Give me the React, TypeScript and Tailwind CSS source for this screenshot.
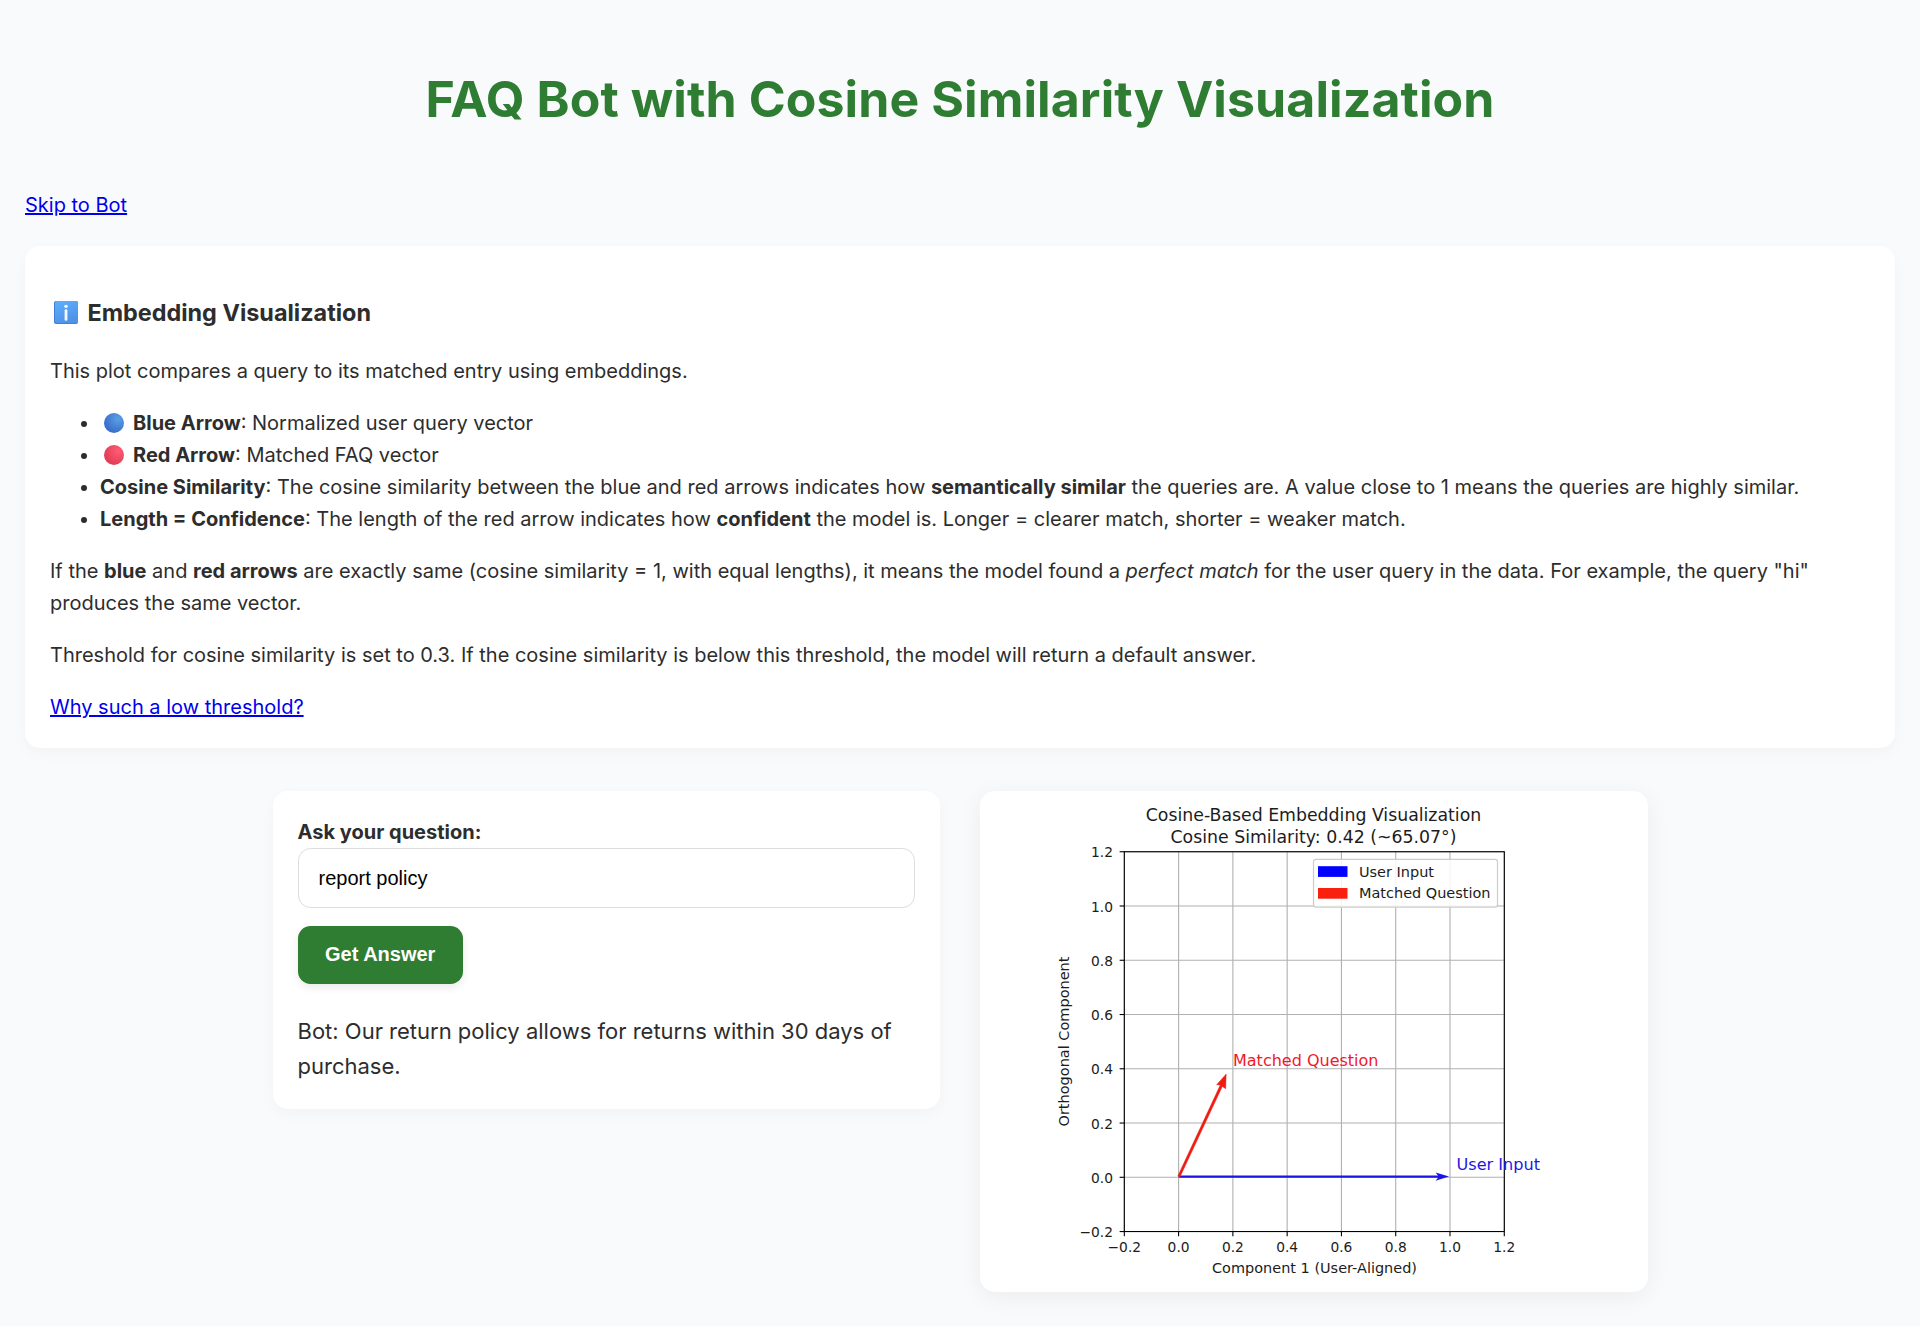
import { useState } from "react";

const sans = "font-['Inter','Liberation_Sans',sans-serif]";
const ticks = [-0.2, 0, 0.2, 0.4, 0.6, 0.8, 1.0, 1.2];
const px = (v: number) => 198.6 + v * 271.4;
const py = (v: number) => 386.3 - v * 271.3;
const label = (v: number) => (v < 0 ? "\u2212" : "") + Math.abs(v).toFixed(1);

function InfoBadge() {
  return (
    <svg viewBox="0 0 24 24" className="mr-[9.5px] ml-[4px] inline-block h-[23px] w-[24px] align-[-3px]" preserveAspectRatio="none">
      <defs>
        <linearGradient id="info" x1="0" y1="0" x2="0.4" y2="1">
          <stop offset="0" stopColor="#5eb0fb" />
          <stop offset="1" stopColor="#5092ea" />
        </linearGradient>
      </defs>
      <rect width="24" height="24" rx="2" fill="#3f7fd6" />
      <rect x="1" width="23" height="23" rx="2" fill="url(#info)" />
      <circle cx="12" cy="5.6" r="1.8" fill="#f4f8ff" />
      <rect x="10.6" y="8.6" width="2.8" height="12" rx="1.4" fill="#f4f8ff" />
    </svg>
  );
}

function Dot({ tone }: { tone: "blue" | "red" }) {
  const fill =
    tone === "blue"
      ? "bg-[radial-gradient(circle_at_70%_30%,#5aa0e4,#3f76d0_60%,#3d55bd)]"
      : "bg-[radial-gradient(circle_at_70%_30%,#ff5c76,#e8415a_60%,#c43a52)]";
  return <span className={`mr-[9px] ml-[4px] inline-block size-[20px] rounded-full align-[-3px] ${fill}`} />;
}

function Chart() {
  return (
    <svg viewBox="0 0 667.5 501" className="block h-[501px] w-[667.5px] font-['DejaVu_Sans',sans-serif]" fill="#1c1c1c">
      <g stroke="#b0b0b0" strokeWidth="1.1">
        {ticks.map((t) => (
          <g key={t}>
            <line x1={px(t)} x2={px(t)} y1={py(-0.2)} y2={py(1.2)} />
            <line x1={px(-0.2)} x2={px(1.2)} y1={py(t)} y2={py(t)} />
          </g>
        ))}
      </g>
      <polygon points="198.6,384.4 458,384.4 455.6,381.6 469,385.6 455.6,389.8 458,386.8 198.6,386.8" fill="#1c14e6" />
      <polygon points="246.2,283 245.7,297.8 242.3,295.6 200,386 197.8,385 240.2,294 236.6,293.8" fill="#ee1c12" stroke="#ee1c12" strokeWidth="0.4" />
      <g stroke="#000" strokeWidth="1.1">
        {ticks.map((t) => (
          <g key={t}>
            <line x1={px(t)} x2={px(t)} y1={py(-0.2)} y2={py(-0.2) + 4.7} />
            <line x1={px(-0.2) - 4.7} x2={px(-0.2)} y1={py(t)} y2={py(t)} />
          </g>
        ))}
        <rect x={px(-0.2)} y={py(1.2)} width="380" height="379.8" fill="none" />
      </g>
      <rect x="333.5" y="68.3" width="184" height="47.8" rx="2.5" fill="#fff" fillOpacity="0.85" stroke="#ccc" strokeWidth="1.2" />
      <rect x="338" y="75.2" width="29.5" height="10.7" fill="#0000ff" />
      <rect x="338" y="97" width="29.5" height="10.7" fill="#fa2010" />
      <g fontSize="14.2">
        <text x="379" y="85.6" textLength="75" lengthAdjust="spacingAndGlyphs">User Input</text>
        <text x="379" y="107.4" textLength="131.5" lengthAdjust="spacingAndGlyphs">Matched Question</text>
        {ticks.map((t) => (
          <g key={t}>
            <text x={px(-0.2) - 11.3} y={py(t) + 5.6} textAnchor="end" fontSize="13.8">{label(t)}</text>
            <text x={px(t)} y="461.3" textAnchor="middle" fontSize="13.8">{label(t)}</text>
          </g>
        ))}
        <text x="334.5" y="482.3" textAnchor="middle" textLength="205" lengthAdjust="spacingAndGlyphs">Component 1 (User-Aligned)</text>
        <text transform="translate(89 250.5) rotate(-90)" textAnchor="middle" textLength="170" lengthAdjust="spacingAndGlyphs">Orthogonal Component</text>
      </g>
      <g fontSize="17.5" textAnchor="middle">
        <text x="333.5" y="30.2" textLength="335.5" lengthAdjust="spacingAndGlyphs">Cosine-Based Embedding Visualization</text>
        <text x="333.5" y="52" textLength="286" lengthAdjust="spacingAndGlyphs">Cosine Similarity: 0.42 (~65.07°)</text>
      </g>
      <g fontSize="16">
        <text x="253" y="275.3" fill="#f0182a" textLength="145.5" lengthAdjust="spacingAndGlyphs">Matched Question</text>
        <text x="476.5" y="378.8" fill="#2218dc" textLength="83.5" lengthAdjust="spacingAndGlyphs">User Input</text>
      </g>
    </svg>
  );
}

export default function App() {
  const [query, setQuery] = useState("report policy");
  return (
    <div className={`h-[1326px] overflow-hidden bg-[#f9fafc] px-[25px] text-[20px] leading-[32px] text-[#2d2d2d] ${sans}`}>
      <h1 className="pt-[59px] text-center text-[50px] leading-[80px] font-bold tracking-[0.09px] text-[#2e7d32]">
        FAQ Bot with Cosine Similarity Visualization
      </h1>
      <a href="#bot" className="mt-[50px] block w-fit text-[#0000ee] underline">Skip to Bot</a>

      <section className="mt-[25px] h-[502px] rounded-[15px] bg-white px-[25px] pt-[48px] shadow-[0_5px_15px_rgba(0,0,0,0.03)]">
        <h3 className="text-[23.4px] leading-[37px] font-bold">
          <InfoBadge />Embedding Visualization
        </h3>
        <p className="mt-[24px]">This plot compares a query to its matched entry using embeddings.</p>
        <ul className="mt-[20px] list-disc pl-[50px]">
          <li><Dot tone="blue" /><b>Blue Arrow</b>: Normalized user query vector</li>
          <li><Dot tone="red" /><b>Red Arrow</b>: Matched FAQ vector</li>
          <li>
            <b>Cosine Similarity</b>: The cosine similarity between the blue and red arrows indicates how{" "}
            <b>semantically similar</b> the queries are. A value close to 1 means the queries are highly similar.
          </li>
          <li>
            <b>Length = Confidence</b>: The length of the red arrow indicates how <b>confident</b> the model is. Longer =
            clearer match, shorter = weaker match.
          </li>
        </ul>
        <p className="mt-[20px]">
          If the <b>blue</b> and <b>red arrows</b> are exactly same (cosine similarity = 1, with equal lengths), it means
          the model found a <em>perfect match</em> for the user query in the data. For example, the query "hi" produces the
          same vector.
        </p>
        <p className="mt-[20px]">
          Threshold for cosine similarity is set to 0.3. If the cosine similarity is below this threshold, the model will
          return a default answer.
        </p>
        <a href="#why" className="mt-[20px] block w-fit text-[#0000ee] underline">Why such a low threshold?</a>
      </section>

      <main id="bot" className="mx-auto mt-[43px] flex w-[1375px] items-start gap-[40px]">
        <section className="h-[318px] flex-1 rounded-[15px] bg-white px-[25px] pt-[25px] shadow-[0_5px_15px_rgba(0,0,0,0.03)]">
          <label htmlFor="q" className="block font-bold">Ask your question:</label>
          <input
            id="q"
            value={query}
            onChange={(e) => setQuery(e.target.value)}
            className="block h-[60px] w-full rounded-[12.5px] border border-[#dddddd] bg-white px-[20px] font-['Liberation_Sans',sans-serif] text-[20px] text-black outline-none"
          />
          <button className="mt-[18px] block h-[58px] rounded-[12.5px] bg-[#2e7d32] px-[27.5px] pb-[2px] font-['Liberation_Sans',sans-serif] text-[20px] font-bold text-white shadow-[0_4px_8px_rgba(0,0,0,0.08)]">
            Get Answer
          </button>
          <p className="mt-[30px] text-[22px] leading-[35.2px]">
            Bot: Our return policy allows for returns within 30 days of purchase.
          </p>
        </section>
        <section className="flex-1 rounded-[15px] bg-white shadow-[0_5px_25px_rgba(0,0,0,0.06)]">
          <Chart />
        </section>
      </main>
    </div>
  );
}
